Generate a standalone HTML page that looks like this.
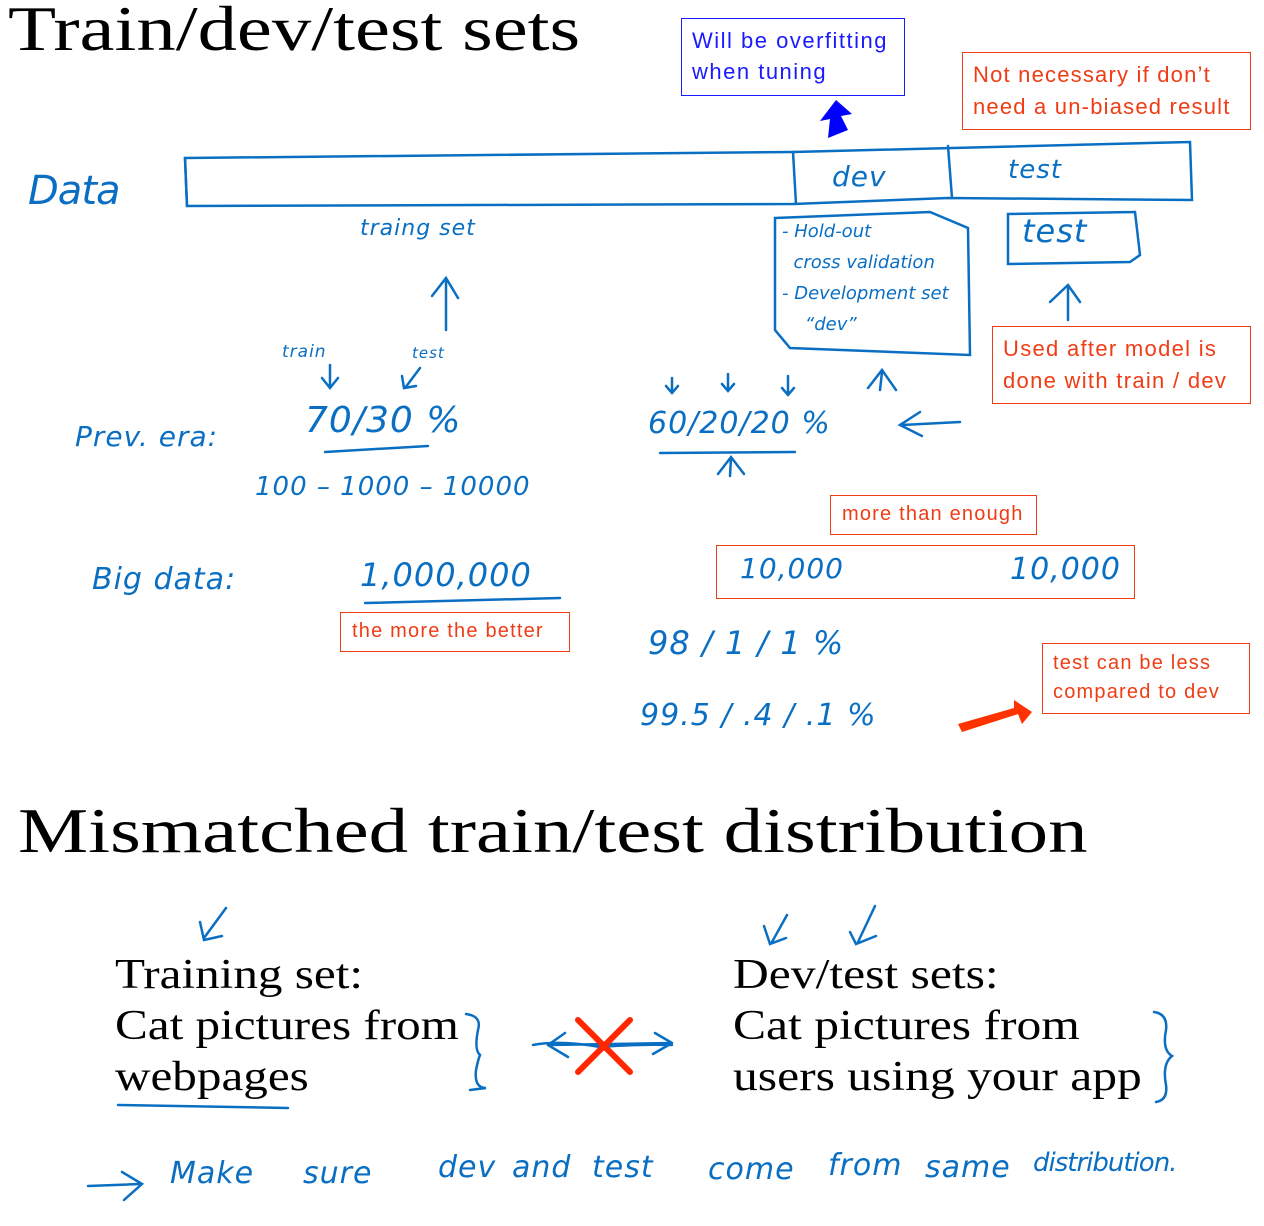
<!DOCTYPE html>
<html><head><meta charset="utf-8">
<style>
html,body{margin:0;padding:0;background:#fff;}
body{width:1264px;height:1226px;position:relative;overflow:hidden;font-family:"Liberation Sans",sans-serif;}
.serif{font-family:"Liberation Serif",serif;color:#000;position:absolute;white-space:nowrap;transform-origin:0 0;}
.hw{position:absolute;color:#0a6fc2;font-family:"DejaVu Sans",sans-serif;font-style:italic;font-weight:300;white-space:nowrap;letter-spacing:1px;}
.box{position:absolute;box-sizing:border-box;font-size:21px;line-height:32px;padding:6px 10px;white-space:nowrap;letter-spacing:0.9px;}
.red{border:1.5px solid #f03c14;color:#f03c14;}
.blue{border:1.5px solid #1a1aff;color:#1a1aff;}
</style></head><body>

<div class="serif" style="left:8px;top:-8px;font-size:64px;transform:scaleX(1.23);">Train/dev/test sets</div>
<div class="serif" style="left:18px;top:794px;font-size:64px;transform:scaleX(1.233);">Mismatched train/test distribution</div>

<div class="box blue" style="left:681px;top:18px;width:224px;height:78px;line-height:31px;padding:6px 10px;font-size:22px;letter-spacing:1.5px;">Will be overfitting<br>when tuning</div>
<div class="box red" style="left:962px;top:52px;width:289px;height:78px;font-size:22px;letter-spacing:1.2px;">Not necessary if don’t<br>need a un-biased result</div>
<div class="box red" style="left:992px;top:326px;width:259px;height:78px;font-size:22px;letter-spacing:1.3px;">Used after model is<br>done with train / dev</div>
<div class="box red" style="left:830px;top:495px;width:207px;height:40px;font-size:20px;line-height:26px;padding:5px 11px;letter-spacing:1.2px;">more than enough</div>
<div class="box red" style="left:340px;top:612px;width:230px;height:40px;font-size:20px;line-height:26px;padding:5px 11px;letter-spacing:1.2px;">the more the better</div>
<div class="box red" style="left:1042px;top:643px;width:208px;height:71px;font-size:20px;line-height:29px;padding:5px 10px;letter-spacing:1.2px;">test can be less<br>compared to dev</div>
<div class="box red" style="left:716px;top:545px;width:419px;height:54px;padding:0;"></div>

<svg width="1264" height="1226" style="position:absolute;left:0;top:0" fill="none" stroke="#0a6fc2" stroke-width="2.5" stroke-linecap="round">
 <path d="M185 158 L793 152 L1190 142 L1192 200 L948 198 L793 204 L187 206 Z"/>
 <path d="M793 152 L796 204 M948 146 L952 198 M185 158 L187 206"/>
 <path d="M775 218 L930 212 L968 228 L970 355 L790 348 L775 330 Z"/>
 <path d="M1008 214 L1135 212 L1140 255 L1130 262 L1008 264 Z"/>
 <path d="M1068 320 L1068 288 M1050 302 L1068 285 L1080 302"/>
 <path d="M446 330 L446 280 M432 296 L446 278 L458 298"/>
 <path d="M880 390 L882 372 M868 388 L882 370 L896 390"/>
 <path d="M730 476 L731 458 M718 474 L731 457 L744 474"/>
 <path d="M960 422 L902 425 M920 412 L900 425 L922 436"/>
 <path d="M330 365 L330 386 M322 378 L330 388 L338 378"/>
 <path d="M420 368 L405 388 M402 376 L404 388 L416 386"/>
 <path d="M672 378 L672 392 M666 386 L672 393 L678 386 M728 374 L728 390 M722 384 L728 391 L734 384 M788 376 L788 394 M782 388 L788 395 L794 388"/>
 <path d="M325 452 L428 446 M660 453 L795 452 M365 603 L560 598 M118 1105 L288 1108"/>
 <path d="M226 908 L204 938 M200 922 L204 940 L222 936"/>
 <path d="M787 915 L772 942 M764 926 L770 944 L786 938"/>
 <path d="M875 906 L858 942 M850 932 L856 944 L876 936"/>
 <path d="M88 1186 L140 1184 M122 1172 L142 1184 L124 1200"/>
 <path d="M466 1014 Q482 1016 478 1030 Q474 1050 480 1055 Q478 1060 476 1070 Q474 1088 486 1088 L470 1090"/>
 <path d="M1154 1012 Q1168 1014 1166 1030 Q1162 1050 1172 1056 Q1162 1064 1166 1085 Q1168 1100 1156 1102"/>
 <path d="M548 1045 L672 1043 M548 1045 L565 1033 M548 1045 L568 1057 M672 1043 L655 1033 M672 1043 L653 1054" />
 <path d="M533 1045 Q560 1040 600 1047 Q640 1044 672 1045"/>
</svg>
<svg width="1264" height="1226" style="position:absolute;left:0;top:0">
 <polygon points="828,138 848,130 841,116 852,114 836,100 820,121 830,119" fill="#0000ff"/>
 <polygon points="962,732 1018,714 1022,724 1032,712 1014,700 1014,708 958,724" fill="#ff3300"/>
 <path d="M578 1020 L630 1072 M630 1020 L578 1072" stroke="#ff2600" stroke-width="6" stroke-linecap="round"/>
</svg>

<div class="hw" style="left:28px;top:168px;font-size:40px;letter-spacing:-1px;">Data</div>
<div class="hw" style="left:832px;top:160px;font-size:28px;">dev</div>
<div class="hw" style="left:1008px;top:155px;font-size:26px;">test</div>
<div class="hw" style="left:360px;top:216px;font-size:22px;">traing set</div>
<div class="hw" style="left:782px;top:216px;font-size:18px;line-height:31px;letter-spacing:0;">- Hold-out<br>&nbsp;&nbsp;cross validation<br>- Development set<br>&nbsp;&nbsp;&nbsp;&nbsp;“dev”</div>
<div class="hw" style="left:1022px;top:212px;font-size:32px;">test</div>
<div class="hw" style="left:282px;top:342px;font-size:17px;">train</div>
<div class="hw" style="left:412px;top:344px;font-size:15px;">test</div>
<div class="hw" style="left:75px;top:420px;font-size:28px;">Prev. era:</div>
<div class="hw" style="left:305px;top:400px;font-size:36px;">70/30 %</div>
<div class="hw" style="left:255px;top:472px;font-size:26px;">100 – 1000 – 10000</div>
<div class="hw" style="left:648px;top:406px;font-size:30px;">60/20/20 %</div>
<div class="hw" style="left:92px;top:562px;font-size:30px;">Big data:</div>
<div class="hw" style="left:360px;top:556px;font-size:32px;">1,000,000</div>
<div class="hw" style="left:740px;top:552px;font-size:28px;">10,000</div>
<div class="hw" style="left:1010px;top:552px;font-size:30px;">10,000</div>
<div class="hw" style="left:648px;top:624px;font-size:32px;">98 / 1 / 1 %</div>
<div class="hw" style="left:640px;top:698px;font-size:30px;">99.5 / .4 / .1 %</div>

<div class="serif" style="left:115px;top:950px;font-size:42px;line-height:51px;transform:scaleX(1.17);">Training set:<br>Cat pictures from<br>webpages</div>
<div class="serif" style="left:733px;top:950px;font-size:42px;line-height:51px;transform:scaleX(1.18);">Dev/test sets:<br>Cat pictures from<br>users using your app</div>

<div class="hw" style="left:170px;top:1156px;font-size:30px;">Make</div>
<div class="hw" style="left:303px;top:1156px;font-size:30px;">sure</div>
<div class="hw" style="left:438px;top:1150px;font-size:30px;">dev</div>
<div class="hw" style="left:512px;top:1150px;font-size:30px;">and</div>
<div class="hw" style="left:592px;top:1150px;font-size:30px;">test</div>
<div class="hw" style="left:708px;top:1152px;font-size:30px;">come</div>
<div class="hw" style="left:828px;top:1148px;font-size:30px;">from</div>
<div class="hw" style="left:925px;top:1150px;font-size:30px;">same</div>
<div class="hw" style="left:1033px;top:1148px;font-size:26px;letter-spacing:-1px;">distribution.</div>
</body></html>
